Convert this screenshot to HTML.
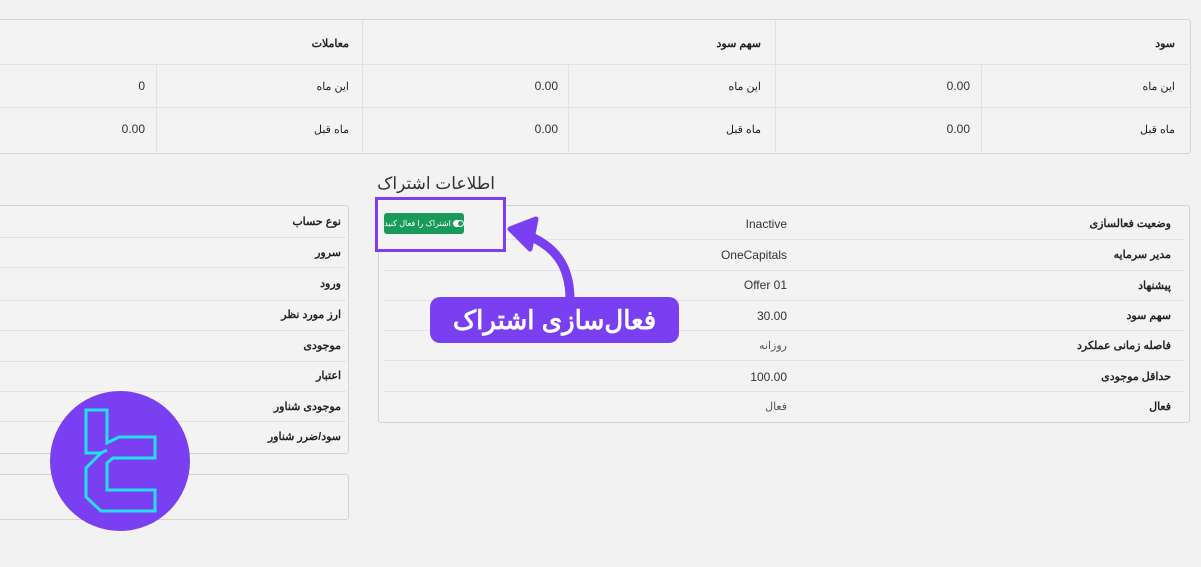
<!DOCTYPE html>
<html><head><meta charset="utf-8"><style>
body{margin:0;width:1201px;height:567px;background:#f2f2f2;position:relative;overflow:hidden;font-family:"Liberation Sans","Noto Sans CJK SC",sans-serif;color:#222}
.a{position:absolute}
.box{position:absolute;border:1px solid #d4d4d4;border-radius:3px;background:#f3f3f3}
.h{position:absolute;height:1px;background:#e2e2e2}
.v{position:absolute;width:1px;background:#e2e2e2}
.t{position:absolute;font-size:11px;direction:rtl;white-space:nowrap}
.b{font-weight:bold}
.n{position:absolute;font-size:12px;color:#333;white-space:nowrap}
</style></head><body>
<!-- top table -->
<div class="box" style="left:-5px;top:19px;width:1194px;height:133px"></div>
<div class="h" style="left:0;top:64px;width:1189px"></div>
<div class="h" style="left:0;top:107px;width:1189px"></div>
<div class="v" style="left:775px;top:20px;height:132px"></div>
<div class="v" style="left:362px;top:20px;height:132px"></div>
<div class="v" style="left:981px;top:65px;height:87px"></div>
<div class="v" style="left:568px;top:65px;height:87px"></div>
<div class="v" style="left:156px;top:65px;height:87px"></div>
<div class="t b" style="right:26px;top:37px">سود</div>
<div class="t b" style="right:440px;top:37px">سهم سود</div>
<div class="t b" style="right:852px;top:37px">معاملات</div>
<div class="t" style="right:26px;top:80px">این ماه</div>
<div class="t" style="right:26px;top:123px">ماه قبل</div>
<div class="t" style="right:440px;top:80px">این ماه</div>
<div class="t" style="right:440px;top:123px">ماه قبل</div>
<div class="t" style="right:852px;top:80px">این ماه</div>
<div class="t" style="right:852px;top:123px">ماه قبل</div>
<div class="n" style="right:231px;top:79px">0.00</div>
<div class="n" style="right:231px;top:122px">0.00</div>
<div class="n" style="right:643px;top:79px">0.00</div>
<div class="n" style="right:643px;top:122px">0.00</div>
<div class="n" style="right:1056px;top:79px">0</div>
<div class="n" style="right:1056px;top:122px">0.00</div>

<div class="a" style="right:706px;top:174px;font-size:17px;color:#333;direction:rtl">اطلاعات اشتراک</div>
<!-- subscription box -->
<div class="box" style="left:378px;top:205px;width:810px;height:216px"></div>
<div class="h" style="left:384px;top:239px;width:800px"></div>
<div class="h" style="left:384px;top:270px;width:800px"></div>
<div class="h" style="left:384px;top:300px;width:800px"></div>
<div class="h" style="left:384px;top:330px;width:800px"></div>
<div class="h" style="left:384px;top:360px;width:800px"></div>
<div class="h" style="left:384px;top:391px;width:800px"></div>
<div class="t b" style="right:30px;top:217px">وضعیت فعالسازی</div>
<div class="t b" style="right:30px;top:248px">مدیر سرمایه</div>
<div class="t b" style="right:30px;top:279px">پیشنهاد</div>
<div class="t b" style="right:30px;top:309px">سهم سود</div>
<div class="t b" style="right:30px;top:339px">فاصله زمانی عملکرد</div>
<div class="t b" style="right:30px;top:370px">حداقل موجودی</div>
<div class="t b" style="right:30px;top:400px">فعال</div>
<div class="n" style="right:414px;top:217px">Inactive</div>
<div class="n" style="right:414px;top:248px">OneCapitals</div>
<div class="n" style="right:414px;top:278px">Offer 01</div>
<div class="n" style="right:414px;top:309px">30.00</div>
<div class="t" style="right:414px;top:339px;color:#555">روزانه</div>
<div class="n" style="right:414px;top:370px">100.00</div>
<div class="t" style="right:414px;top:400px;color:#555">فعال</div>
<!-- highlight -->
<div class="a" style="left:375px;top:197px;width:131px;height:55px;border:3px solid #7b3ff2;box-sizing:border-box;background:#f3f3f3"></div>
<div class="a" style="left:384px;top:213px;width:80px;height:21px;background:#1a9a5a;border-radius:3px;color:#fff;font-size:8px;direction:rtl;line-height:21px;text-align:center;white-space:nowrap;overflow:hidden;letter-spacing:-0.3px">
<span style="display:inline-block;width:11px;height:7px;background:#fff;border-radius:4px;vertical-align:middle;position:relative;margin-left:2px"><span style="position:absolute;right:1px;top:1px;width:5px;height:5px;border-radius:50%;background:#1a9a5a"></span></span>اشتراک را فعال کنید</div>
<svg class="a" style="left:500px;top:215px" width="90" height="90"><path d="M70 85 C70 50 55 30 22 18" fill="none" stroke="#7b3ff2" stroke-width="9" stroke-linecap="round"/><path d="M10 14 L36 4 L30 34 Z" fill="#7b3ff2" stroke="#7b3ff2" stroke-width="5" stroke-linejoin="round"/></svg>
<div class="a" style="left:430px;top:297px;width:249px;height:46px;background:#7b3ff2;border-radius:10px;color:#fff;font-size:26px;font-weight:bold;text-align:center;line-height:46px;direction:rtl">فعال‌سازی اشتراک</div>
<!-- left box -->
<div class="box" style="left:-5px;top:205px;width:352px;height:247px"></div>
<div class="h" style="left:0;top:237px;width:346px"></div>
<div class="h" style="left:0;top:267px;width:346px"></div>
<div class="h" style="left:0;top:300px;width:346px"></div>
<div class="h" style="left:0;top:330px;width:346px"></div>
<div class="h" style="left:0;top:361px;width:346px"></div>
<div class="h" style="left:0;top:391px;width:346px"></div>
<div class="h" style="left:0;top:421px;width:346px"></div>
<div class="t b" style="right:860px;top:215px">نوع حساب</div>
<div class="t b" style="right:860px;top:246px">سرور</div>
<div class="t b" style="right:860px;top:277px">ورود</div>
<div class="t b" style="right:860px;top:308px">ارز مورد نظر</div>
<div class="t b" style="right:860px;top:339px">موجودی</div>
<div class="t b" style="right:860px;top:369px">اعتبار</div>
<div class="t b" style="right:860px;top:400px">موجودی شناور</div>
<div class="t b" style="right:860px;top:430px">سود/ضرر شناور</div>
<div class="box" style="left:-5px;top:474px;width:352px;height:44px"></div>
<!-- logo -->
<svg class="a" style="left:0;top:0" width="200" height="567"><circle cx="120" cy="461" r="70" fill="#7b3ff2"/>
<path d="M86 410 H107 V443 L119 437 H155 V458 H113 L107 463 V490 H155 V511 H101 L86 497 V468 L101 453 H86 Z" fill="none" stroke="#22e0f0" stroke-width="3" stroke-linejoin="miter"/>
<path d="M101 453 L107 450" stroke="#22e0f0" stroke-width="3"/></svg>
</body></html>
